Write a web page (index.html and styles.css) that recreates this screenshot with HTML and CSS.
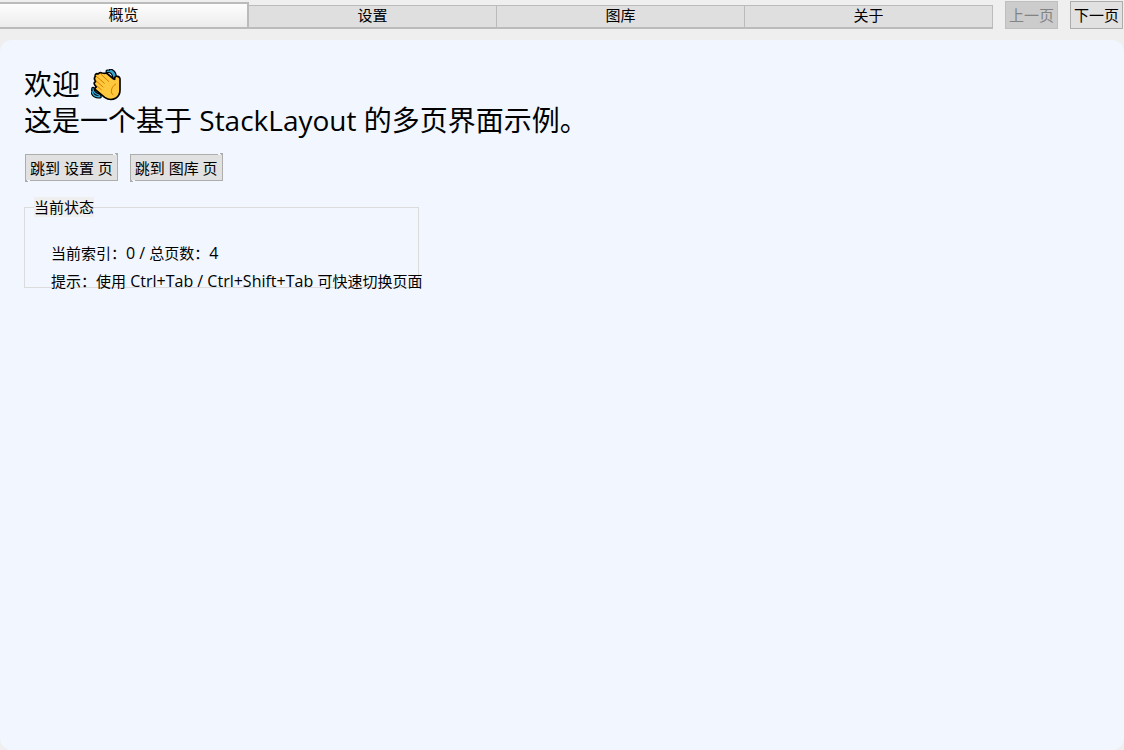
FILE: index.html
```
<!DOCTYPE html>
<html lang="zh-CN">
<head>
    <meta charset="UTF-8">
    <meta name="viewport" content="width=device-width, initial-scale=1.0">
    <title>StackLayout 多页界面示例</title>
    <link rel="stylesheet" href="styles.css">
</head>
<body>
    <header class="toolbar">
        <nav class="tab-bar" role="tablist">
            <button class="tab active" role="tab" aria-selected="true">概览</button>
            <button class="tab" role="tab" aria-selected="false">设置</button>
            <button class="tab" role="tab" aria-selected="false">图库</button>
            <button class="tab" role="tab" aria-selected="false">关于</button>
        </nav>
        <button class="btn" disabled>上一页</button>
        <button class="btn">下一页</button>
    </header>

    <main class="page">
        <h1 class="title">
            欢迎
            <svg class="wave" viewBox="33 27 90 96" role="img" aria-label="挥手">
                <path class="arc-edge" d="M82 34q17-2 20 18M92 31q12 4 13 18M36 94q4 18 24 16M39 86q-1 14 20 20"/>
                <path class="arc" d="M82 34q17-2 20 18M92 31q12 4 13 18M36 94q4 18 24 16M39 86q-1 14 20 20"/>
                <path class="hand" d="M46 49q-2-6 5-8 2 0 4 1 3-6 11-3l9 1q4-2 8 2l18 15 3 1V54q1-6 8-5 7 1 8 8v33q0 16-12 24-17 10-34-2L47 90q-5-6 2-9l-5-7q-4-7 3-9l-3-6q-2-6 2-10z"/>
                <path class="crease" d="M48 48l25 22M63 43l23 21M48 62l21 19M50 77l14 12M107 72q-13 8-13 23 0 7 5 9"/>
            </svg>
            <br>
            这是一个基于 StackLayout 的多页界面示例。
        </h1>

        <div class="actions">
            <button class="btn">跳到 设置 页</button>
            <button class="btn">跳到 图库 页</button>
        </div>

        <fieldset class="status">
            <legend>当前状态</legend>
            <p>当前索引：<span class="latin">0 / </span>总页数：<span class="latin">4</span></p>
            <p>提示：使用<span class="latin"> Ctrl+Tab / Ctrl+Shift+Tab </span>可快速切换页面</p>
        </fieldset>
    </main>
</body>
</html>
```
FILE: styles.css
```
* {
    box-sizing: border-box;
}
body {
    display: flex;
    flex-direction: column;
    min-height: 100vh;
    margin: 0;
    background-color: #efefef;
    color: #000;
    font: 15px/20px "Open Sans", "Noto Sans CJK SC", sans-serif;
}
button {
    margin: 0;
    font: inherit;
    color: inherit;
}

/* 顶部标签栏 */
.toolbar {
    display: flex;
    align-items: flex-start;
    gap: 12px;
    height: 40px;
    padding: 1px 1px 0 0;
}
.tab-bar {
    display: flex;
    flex: 1;
    align-items: flex-end;
    height: 28px;
    border-bottom: 1px solid #bbb;
}
.tab {
    flex: 1;
    height: 23px;
    padding: 0 0 3px;
    border: 1px solid #bbb;
    border-left: 0;
    background-color: #dfdfdf;
    line-height: 18px;
}
.tab.active {
    height: 26px;
    border-width: 2px 2px 1px 0;
    background: linear-gradient(#fdfdfd, #ececec);
}
.btn {
    height: 28px;
    padding: 0 3px 1px;
    border: 1px solid #adadad;
    background-color: #e1e1e1;
    white-space: nowrap;
}
.btn:disabled {
    border-color: #bfbfbf;
    background-color: #ccc;
    color: #838383;
}

/* 页面内容 */
.page {
    display: flex;
    flex: 1;
    flex-direction: column;
    align-items: flex-start;
    padding: 26px 24px;
    border-radius: 12px;
    background-color: #f1f6ff;
}
.title {
    margin: 0;
    font-size: 28px;
    font-weight: normal;
    line-height: 36px;
}
.wave {
    width: 30px;
    height: 32px;
    margin-left: 4px;
    vertical-align: -6px;
    fill: none;
    stroke-linecap: round;
    stroke-linejoin: round;
}
.arc-edge {
    stroke: #000;
    stroke-width: 11;
}
.arc {
    stroke: #35a9d6;
    stroke-width: 4;
}
.hand {
    fill: #ffc83d;
    stroke: #000;
    stroke-width: 5;
}
.crease {
    stroke: #d67d00;
    stroke-width: 3;
}
.actions {
    display: flex;
    gap: 12px;
    margin: 16px 0;
    padding-left: 1px;
}
.actions .btn {
    position: relative;
    height: 27px;
    padding: 0 4px;
}
/* 按钮边框两角的缺口 */
.actions .btn::before,
.actions .btn::after {
    content: "";
    position: absolute;
    width: 3px;
    height: 1px;
    background-color: #f1f6ff;
}
.actions .btn::before {
    top: -1px;
    right: 1px;
    box-shadow: 2px -1px #adadad;
}
.actions .btn::after {
    bottom: -1px;
    left: 1px;
    box-shadow: -2px 1px #adadad;
}
.status {
    width: 395px;
    min-width: 0;
    height: 91px;
    margin: 0;
    padding: 26px 26px 0;
    border: 1px solid #dcdcdc;
    white-space: nowrap;
}
.status legend {
    margin-left: -17px;
    padding: 0;
    background-color: #efefef;
}
.status p {
    margin: 0 0 8px;
}
.latin {
    font-size: 16px;
}
```
